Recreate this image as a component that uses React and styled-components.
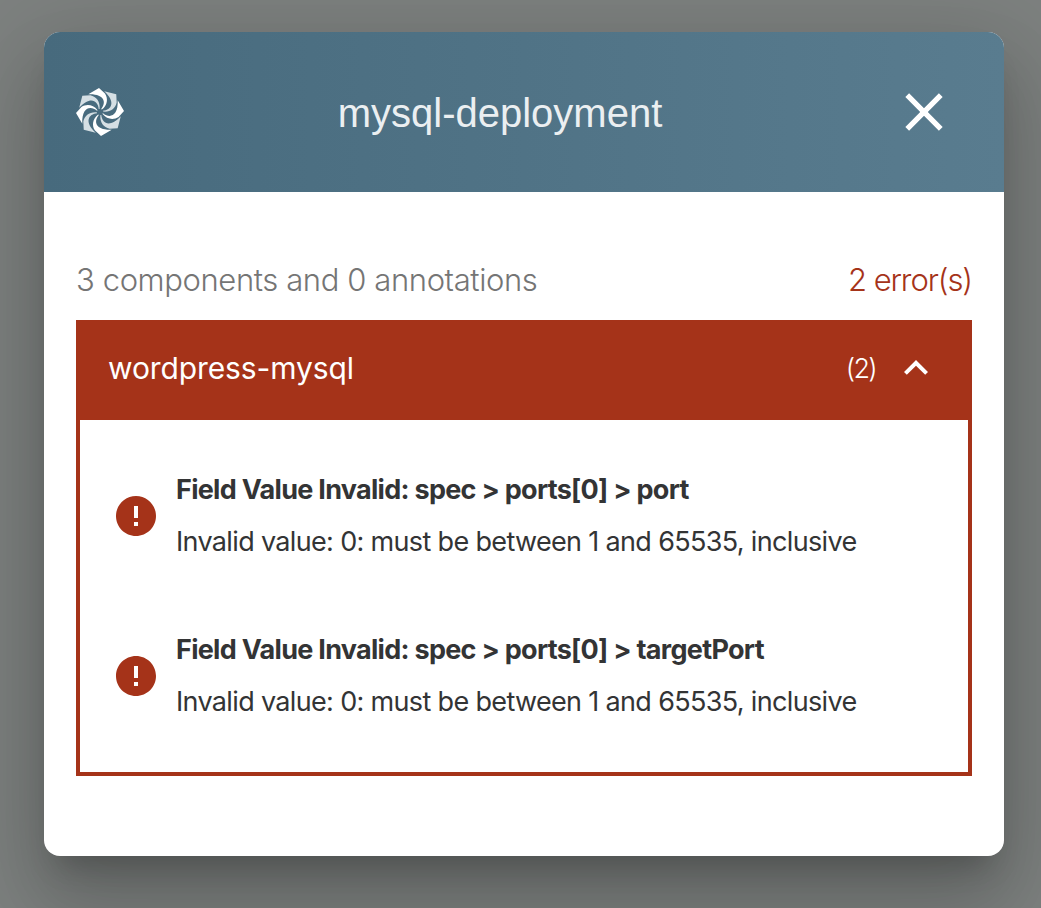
import React from "react";
import styled, { createGlobalStyle } from "styled-components";

const GlobalStyle = createGlobalStyle`
  * { box-sizing: border-box; }
  body { margin: 0; background: #7d817f; overflow: hidden; }
`;

const Backdrop = styled.div`
  height: 908px;
  padding: 32px 37px 52px 44px;
  font-family: Inter, "Liberation Sans", sans-serif;
  overflow: hidden;
`;

const Dialog = styled.section`
  height: 824px;
  border-radius: 16px;
  background: #fff;
  overflow: hidden;
  box-shadow: 0 22px 30px -14px rgba(0, 0, 0, 0.2),
    0 48px 76px 6px rgba(0, 0, 0, 0.14), 0 18px 92px 16px rgba(0, 0, 0, 0.12);
`;

const Header = styled.header`
  display: flex;
  align-items: center;
  justify-content: space-between;
  height: 160px;
  padding: 0 48px 0 32px;
  background: linear-gradient(90deg, #476a7d, #597c8f);
`;

const Title = styled.h1`
  margin: 0 16px 0 0;
  padding-top: 2px;
  font: 400 40px/60px "Liberation Sans", Arial, sans-serif;
  color: #ebeff1;
  white-space: nowrap;
`;

const IconButton = styled.button`
  display: flex;
  padding: 0;
  border: 0;
  background: none;
  color: #fff;
`;

const Body = styled.div`
  padding: 64px 32px 0;
`;

const Summary = styled.div`
  display: flex;
  justify-content: space-between;
  height: 64px;
  line-height: 48px;
`;

const Text = styled.span`
  font-size: ${(p) => p.$size}px;
  font-weight: ${(p) => p.$weight || 400};
  letter-spacing: ${(p) => p.$tracking || 0}px;
  color: ${(p) => p.$color || "inherit"};
  white-space: nowrap;
`;

const Panel = styled.div`
  height: 456px;
  border: 4px solid #a53319;
`;

const PanelHeader = styled.div`
  display: flex;
  align-items: center;
  height: 96px;
  padding: 0 28px 8px;
  background: #a53319;
  color: #fff;
`;

const Spacer = styled.div`
  flex: 1;
`;

const Chevron = styled.svg`
  margin-left: 16px;
`;

const ErrorList = styled.ul`
  margin: 0;
  padding: 16px 32px;
  list-style: none;
`;

const ErrorRow = styled.li`
  display: flex;
  align-items: center;
  gap: 16px;
  height: 160px;
`;

const ErrorText = styled.div`
  display: flex;
  flex-direction: column;
  line-height: 52px;
  color: #333435;
`;

const blades = [0, 1, 2, 3, 4, 5, 6, 7];

const Logo = () => (
  <svg width="48" height="48" viewBox="-24 -24 48 48">
    {blades.map((i) => (
      <path
        key={i}
        transform={`rotate(${i * 45})`}
        fill={i % 2 ? "#d5dfe4" : "#fff"}
        d="M-11.7-17.7L-1-24L5-18.6C8.3-13.5 7.6-7 1.8-2.4L1.2-3C6.6-9.5 4.6-18.4-11.7-17.7Z"
      />
    ))}
  </svg>
);

const CloseIcon = () => (
  <svg width="64" height="64" viewBox="0 0 24 24" fill="currentColor">
    <path d="M19 6.41 17.59 5 12 10.59 6.41 5 5 6.41 10.59 12 5 17.59 6.41 19 12 13.41 17.59 19 19 17.59 13.41 12z" />
  </svg>
);

const AlertIcon = () => (
  <svg width="48" height="48" viewBox="0 0 24 24" fill="#a53319">
    <path d="M12 2C6.48 2 2 6.48 2 12s4.48 10 10 10 10-4.48 10-10S17.52 2 12 2zm1 15h-2v-2h2v2zm0-4h-2V7h2v6z" />
  </svg>
);

const errors = ["port", "targetPort"];

export default function App() {
  return (
    <Backdrop>
      <GlobalStyle />
      <Dialog>
        <Header>
          <Logo />
          <Title>mysql-deployment</Title>
          <IconButton aria-label="Close">
            <CloseIcon />
          </IconButton>
        </Header>
        <Body>
          <Summary>
            <Text $size={31} $weight={300} $tracking={-0.4} $color="#757575">
              3 components and 0 annotations
            </Text>
            <Text $size={31} $weight={300} $tracking={-1.1} $color="#a53319">
              2 error(s)
            </Text>
          </Summary>
          <Panel>
            <PanelHeader>
              <Text $size={30} $tracking={-0.1}>wordpress-mysql</Text>
              <Spacer />
              <Text $size={27} $weight={300} $tracking={-1.7}>(2)</Text>
              <Chevron width="48" height="48" viewBox="0 0 24 24" fill="#fff">
                <path d="M12 8l-6 6 1.41 1.41L12 10.83l4.59 4.58L18 14z" />
              </Chevron>
            </PanelHeader>
            <ErrorList>
              {errors.map((field) => (
                <ErrorRow key={field}>
                  <AlertIcon />
                  <ErrorText>
                    <Text $size={27} $weight={700} $tracking={-0.71}>
                      {`Field Value Invalid: spec > ports[0] > ${field}`}
                    </Text>
                    <Text $size={27} $tracking={-0.66}>
                      Invalid value: 0: must be between 1 and 65535, inclusive
                    </Text>
                  </ErrorText>
                </ErrorRow>
              ))}
            </ErrorList>
          </Panel>
        </Body>
      </Dialog>
    </Backdrop>
  );
}
